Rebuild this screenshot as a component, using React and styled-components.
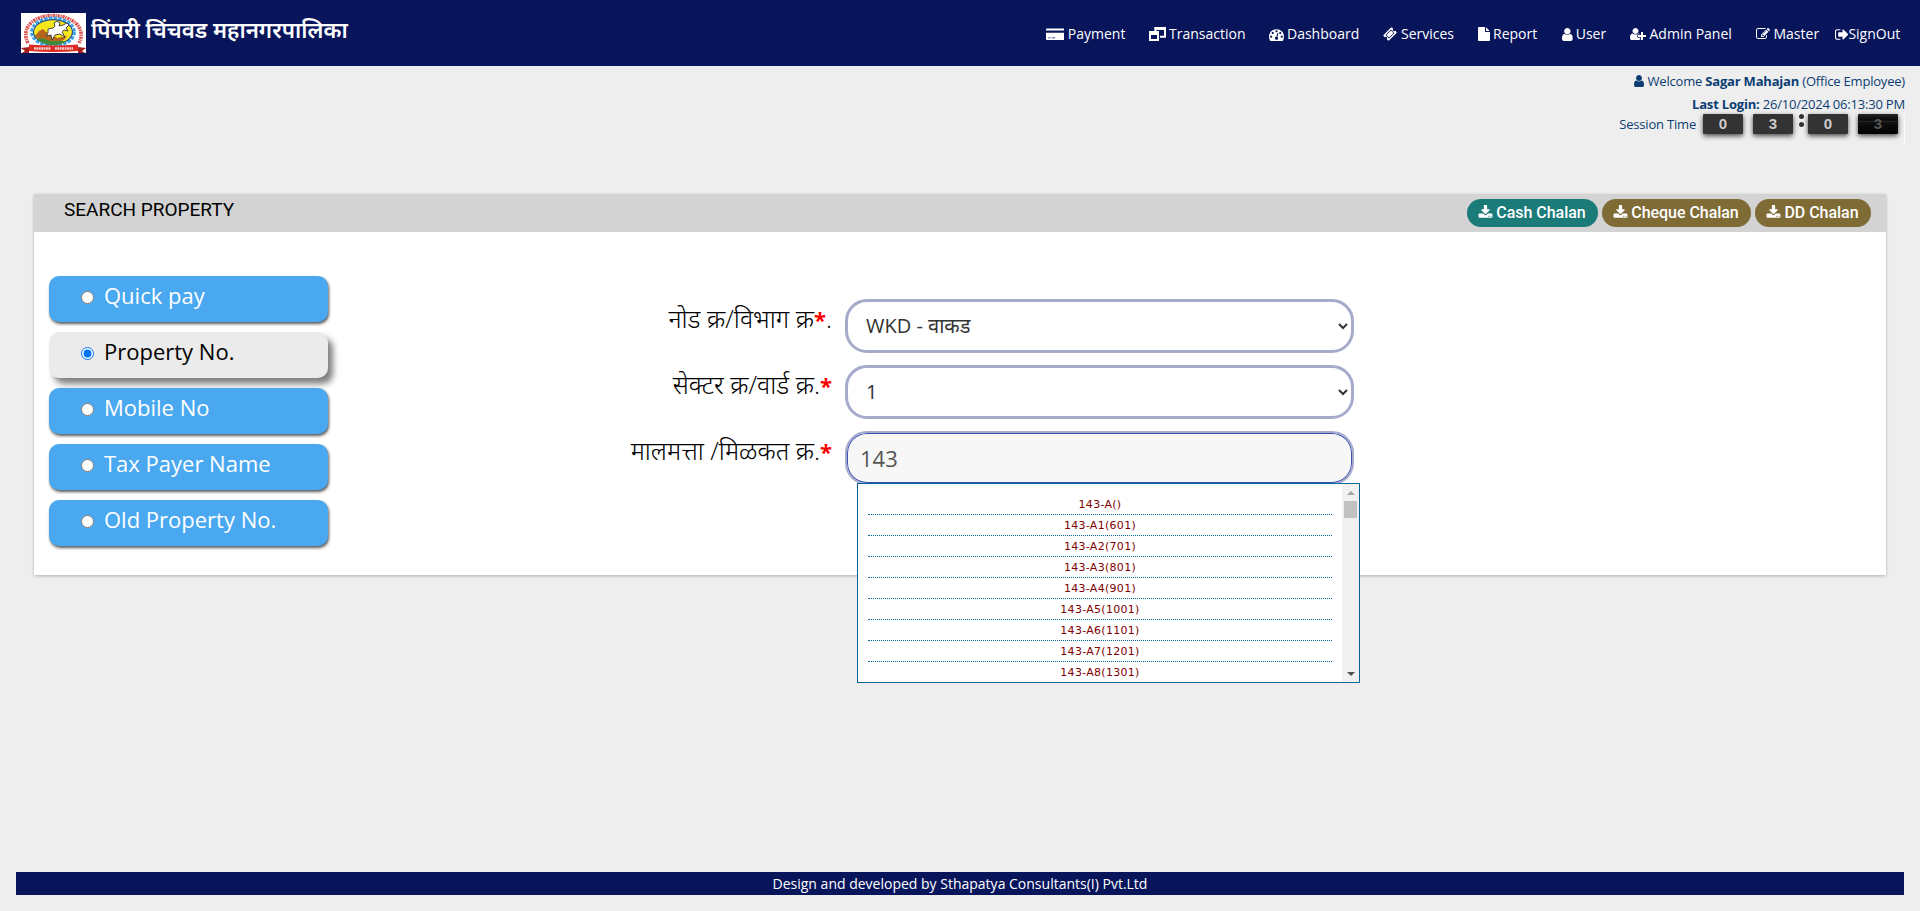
import React from 'react';
import styled, { createGlobalStyle } from 'styled-components';

const Global = createGlobalStyle`
  *, *::before, *::after { box-sizing: border-box; }
  body { margin: 0; background: #eee; font-family: "Open Sans", "Noto Sans", sans-serif; }
`;

const Page = styled.div`
  height: 911px;
  display: flex;
  flex-direction: column;
  overflow: hidden;
`;

const Header = styled.header`
  height: 66px;
  flex: none;
  display: flex;
  align-items: flex-start;
  justify-content: space-between;
  background: #08155b;
  padding: 13px 20px 0 21px;
`;

const Brand = styled.div`
  display: flex;
  gap: 5px;
`;

const BrandName = styled.h1`
  margin: 0;
  color: #fff;
  font-size: 22.3px;
  line-height: 33px;
  font-weight: 600;
  white-space: nowrap;
`;

const Logo = styled.svg`
  width: 65px;
  height: 40px;
  display: block;
`;

const Nav = styled.nav`
  display: flex;
  padding-top: 11px;
`;

const NavItem = styled.a`
  display: flex;
  align-items: center;
  gap: ${(p) => p.$gap ?? 3}px;
  width: ${(p) => p.$width}px;
  color: #fff;
  font-size: 14px;
  line-height: 20px;
  white-space: nowrap;
`;

const Glyph = styled.svg`
  display: block;
  flex: none;
  fill: currentColor;
`;

const Account = styled.section`
  height: 128px;
  flex: none;
  display: flex;
  flex-direction: column;
  align-items: flex-end;
  padding: 3px 15px 0 0;
  color: #0b3d73;
  font-size: 13px;
  letter-spacing: -0.2px;
`;

const AccountLine = styled.div`
  display: flex;
  align-items: center;
  gap: 4px;
  height: 23px;
  line-height: 20px;
  white-space: nowrap;
`;

const Session = styled.div`
  display: flex;
  align-items: flex-start;
  height: 32px;
  margin-top: -2px;
  padding-right: 1px;
  border-right: 1px solid #fafafa;
  line-height: 23px;
`;

const Clock = styled.div`
  display: flex;
  margin: 1px 5px 0 7px;
`;

const Digit = styled.span`
  position: relative;
  width: 40px;
  height: 20px;
  margin-right: ${(p) => p.$after ?? 0}px;
  border-radius: 1px;
  background: ${(p) => (p.$turning ? 'linear-gradient(#252525 0, #080808 30%, #000 31%, #333 36%, #111 40%, #000 100%)' : '#333')};
  box-shadow: 0 2px 5px rgba(0, 0, 0, .7);
  color: ${(p) => (p.$turning ? '#555' : '#ccc')};
  font: bold 15px/20px "Liberation Sans", Arial, sans-serif;
  letter-spacing: 0;
  text-align: center;
`;

const Colon = styled.span`
  width: 15px;
  display: flex;
  flex-direction: column;
  align-items: center;
  gap: 3px;
  padding-left: 2px;
  &::before, &::after {
    content: "";
    width: 5px;
    height: 5px;
    border-radius: 50%;
    background: #333;
  }
`;

const Card = styled.main`
  height: 381px;
  flex: none;
  margin: 0 34px;
  background: #fff;
  box-shadow: 0 1px 3px rgba(0, 0, 0, .25);
`;

const CardHeader = styled.div`
  height: 38px;
  display: flex;
  align-items: flex-start;
  justify-content: space-between;
  padding: 5px 15px 0 30px;
  background: #d3d3d3;
  font-family: Roboto, sans-serif;
`;

const CardTitle = styled.h2`
  margin: 0;
  color: #000;
  font-size: 19px;
  line-height: 21px;
  font-weight: 400;
`;

const Chalans = styled.div`
  display: flex;
  gap: 4px;
`;

const ChalanButton = styled.button`
  width: ${(p) => p.$width}px;
  height: 28px;
  display: flex;
  align-items: center;
  justify-content: center;
  gap: 3px;
  padding: 0 1px 1px 0;
  border: 0;
  border-radius: 14px;
  background: ${(p) => p.$color};
  color: #fff;
  font: 500 16px/24px Roboto, sans-serif;
  letter-spacing: -0.04px;
  white-space: nowrap;
`;

const CardBody = styled.div`
  display: flex;
`;

const Options = styled.div`
  width: 294px;
  display: flex;
  flex-direction: column;
  gap: 10px;
  padding: 44px 0 0 15px;
`;

const Option = styled.label`
  width: 279px;
  height: 46px;
  display: flex;
  align-items: flex-start;
  padding-left: 32px;
  border-radius: 10px;
  background: ${(p) => (p.$active ? '#ebebeb' : '#49a8f0')};
  box-shadow: ${(p) => (p.$active ? '5px 6px 6px rgba(0, 0, 0, .5)' : '1px 2px 3px rgba(0, 0, 0, .65)')};
  color: ${(p) => (p.$active ? '#000' : '#fff')};
  font-size: 22px;
  line-height: 38px;
  white-space: nowrap;
  input { margin: 15px 10px 0 0; width: 13px; height: 13px; }
`;

const Fields = styled.form`
  width: 1030px;
  display: flex;
  flex-direction: column;
  gap: 12px;
  padding-top: 67px;
`;

const Field = styled.div`
  height: 54px;
  display: flex;
  position: relative;
`;

const FieldLabel = styled.label`
  width: 504px;
  margin-right: 13px;
  color: #000;
  font-size: 25.1px;
  line-height: 39px;
  font-weight: 300;
  text-align: right;
  white-space: nowrap;
`;

const Required = styled.span`
  color: red;
  font-size: 22px;
  font-weight: 700;
`;

const boxStyle = `
  width: 509px;
  height: 54px;
  margin: 0;
  border: 3px solid #a7abcb;
  border-radius: 22px;
  font: 400 20px/28px "Open Sans", "Noto Sans", sans-serif;
  outline: 0;
`;

const Select = styled.select`
  ${boxStyle}
  padding: 0 0 2px 14px;
  background: #fff;
  color: #333;
`;

const Input = styled.input`
  ${boxStyle}
  padding: 0 12px 0 13px;
  border-width: 2px;
  background: #f7f7f8;
  box-shadow: inset 0 0 0 1px #3c4fb0;
  color: #555;
  font-size: 22px;
`;

const Suggestions = styled.div`
  position: absolute;
  z-index: 2;
  top: 52px;
  left: 529px;
  width: 503px;
  height: 200px;
  display: flex;
  border: 1px solid #006699;
  background: #fff;
`;

const SuggestionList = styled.ul`
  flex: 1;
  margin: 0;
  padding: 10px;
  overflow: hidden;
  list-style: none;
`;

const Suggestion = styled.li`
  height: 21px;
  border-bottom: 1px dotted #006699;
  color: #800000;
  font: 11px/22px "DejaVu Sans", sans-serif;
  letter-spacing: 0.3px;
  text-align: center;
`;

const ScrollTrack = styled.div`
  width: 17px;
  display: flex;
  flex-direction: column;
  align-items: center;
  background: #f1f1f1;
`;

const ScrollArrow = styled.i`
  width: 17px;
  height: 17px;
  display: flex;
  align-items: center;
  justify-content: center;
  color: ${(p) => p.$color};
`;

const ScrollThumb = styled.i`
  width: 13px;
  height: 17px;
  margin-bottom: auto;
  background: #c1c1c1;
`;

const Footer = styled.footer`
  height: 23px;
  margin: auto 16px 16px;
  background: #08155b;
  color: #fff;
  font-size: 14px;
  line-height: 23px;
  text-align: center;
`;

const paths = {
  card: [2048, 'M0 384q0-96 96-96h1856q96 0 96 96v120H0zM0 760h2048v700q0 96-96 96H96q-96 0-96-96zM256 1280v100h256v-100zM640 1280v100h384v-100z'],
  windows: [2176, 'M680 0h1496v1370h-768v-256h512V384H936v128H680zM0 512h1280v1280H0zM256 1024v512h768v-512z'],
  dashboard: [1792, 'M384 1152q0-53-37.5-90.5t-90.5-37.5-90.5 37.5-37.5 90.5 37.5 90.5 90.5 37.5 90.5-37.5 37.5-90.5zm192-448q0-53-37.5-90.5t-90.5-37.5-90.5 37.5-37.5 90.5 37.5 90.5 90.5 37.5 90.5-37.5 37.5-90.5zm428 481l101-382q6-26-7.5-48.5t-38.5-29.5-48 6.5-30 39.5l-101 382q-60 5-107 43.5t-63 98.5q-20 77 20 146t117 89 146-20 89-117q16-60-6-117t-72-91zm660-33q0-53-37.5-90.5t-90.5-37.5-90.5 37.5-37.5 90.5 37.5 90.5 90.5 37.5 90.5-37.5 37.5-90.5zm-640-640q0-53-37.5-90.5t-90.5-37.5-90.5 37.5-37.5 90.5 37.5 90.5 90.5 37.5 90.5-37.5 37.5-90.5zm448 192q0-53-37.5-90.5t-90.5-37.5-90.5 37.5-37.5 90.5 37.5 90.5 90.5 37.5 90.5-37.5 37.5-90.5zm320 448q0 261-141 483-19 29-54 29h-1402q-35 0-54-29-141-221-141-483 0-182 71-348t191-286 286-191 348-71 348 71 286 191 191 286 71 348z'],
  ticket: [1792, 'M1024 452l316 316-572 572-316-316zm-211 979l618-618q19-19 19-45t-19-45l-362-362q-18-18-45-18t-45 18l-618 618q-19 19-19 45t19 45l362 362q18 18 45 18t45-18zm889-637l-907 908q-37 37-90.5 37t-90.5-37l-126-126q56-56 56-136t-56-136-136-56-136 56l-125-126q-37-37-37-90.5t37-90.5l907-906q37-37 90.5-37t90.5 37l125 125q-56 56-56 136t56 136 136 56 136-56l126 125q37 37 37 90.5t-37 90.5z'],
  file: [1536, 'M1024 512V40q22 14 36 28l408 408q14 14 28 36zm-128 32q0 40 28 68t68 28h544v1056q0 40-28 68t-68 28H96q-40 0-68-28t-28-68V96q0-40 28-68t68-28h800z'],
  user: [1280, 'M1280 1399q0 109-62.5 187t-150.5 78H213q-88 0-150.5-78T0 1399q0-85 8.5-160.5t31.5-152 58.5-131 94-89 134.5-34.5q131 128 313 128t313-128q76 0 134.5 34.5t94 89 58.5 131 31.5 152 8.5 160.5zm-256-887q0 159-112.5 271.5t-271.5 112.5-271.5-112.5-112.5-271.5 112.5-271.5 271.5-112.5 271.5 112.5 112.5 271.5z'],
  userPlus: [2048, 'M704 896q-159 0-271.5-112.5t-112.5-271.5 112.5-271.5 271.5-112.5 271.5 112.5 112.5 271.5-112.5 271.5-271.5 112.5zm960 128h352q13 0 22.5 9.5t9.5 22.5v192q0 13-9.5 22.5t-22.5 9.5h-352v352q0 13-9.5 22.5t-22.5 9.5h-192q-13 0-22.5-9.5t-9.5-22.5v-352h-352q-13 0-22.5-9.5t-9.5-22.5v-192q0-13 9.5-22.5t22.5-9.5h352v-352q0-13 9.5-22.5t22.5-9.5h192q13 0 22.5 9.5t9.5 22.5v352zm-736 224q0 52 38 90t90 38h256v238q-68 50-171 50h-874q-121 0-194-69t-73-190q0-53 3.5-103.5t14-109 26.5-108.5 43-97.5 62-81 85.5-53.5 111.5-20q19 0 39 17 79 61 154.5 91.5t164.5 30.5 164.5-30.5 154.5-91.5q20-17 39-17 132 0 217 96h-223q-52 0-90 38t-38 90v192z'],
  edit: [1792, 'M888 1184l116-116-152-152-116 116v56h96v96h56zm440-720q-16-16-33 1l-350 350q-17 17-1 33t33-1l350-350q17-17 1-33zm80 594v190q0 119-84.5 203.5t-203.5 84.5h-832q-119 0-203.5-84.5t-84.5-203.5v-832q0-119 84.5-203.5t203.5-84.5h832q63 0 117 25 15 7 18 23 3 17-9 29l-49 49q-14 14-32 8-23-6-45-6h-832q-66 0-113 47t-47 113v832q0 66 47 113t113 47h832q66 0 113-47t47-113v-126q0-13 9-22l64-64q15-15 35-7t20 29zm-96-738l288 288-672 672h-288v-288zm444 132l-92 92-288-288 92-92q28-28 68-28t68 28l152 152q28 28 28 68t-28 68z'],
  signOut: [1600, 'M640 1440q0 4 1 20t.5 26.5-3 23.5-10 19.5-20.5 6.5h-320q-119 0-203.5-84.5t-84.5-203.5v-704q0-119 84.5-203.5t203.5-84.5h320q13 0 22.5 9.5t9.5 22.5q0 4 1 20t.5 26.5-3 23.5-10 19.5-20.5 6.5h-320q-66 0-113 47t-47 113v704q0 66 47 113t113 47h312l11.5 1 11.5 3 8 5.5 7 9 2 13.5zm928-544q0 26-19 45l-544 544q-19 19-45 19t-45-19-19-45v-288h-448q-26 0-45-19t-19-45v-384q0-26 19-45t45-19h448v-288q0-26 19-45t45-19 45 19l544 544q19 19 19 45z'],
  download: [1792, 'M1344 1344q0-26-19-45t-45-19-45 19-19 45 19 45 45 19 45-19 19-45zm256 0q0-26-19-45t-45-19-45 19-19 45 19 45 45 19 45-19 19-45zm128-224v320q0 40-28 68t-68 28h-1472q-40 0-68-28t-28-68v-320q0-40 28-68t68-28h465l135 136q58 56 136 56t136-56l136-136h464q40 0 68 28t28 68zm-325-569q17 41-14 70l-448 448q-18 19-45 19t-45-19l-448-448q-31-29-14-70 17-39 59-39h256v-448q0-26 19-45t45-19h256q26 0 45 19t19 45v448h256q42 0 59 39z'],
};

function Icon({ name, size = 14 }) {
  const [w, d] = paths[name];
  return (
    <Glyph width={(size * w) / 1792} height={size} viewBox={`0 0 ${w} 1792`}>
      <path fillRule="evenodd" d={d} />
    </Glyph>
  );
}

function Emblem() {
  return (
    <Logo viewBox="0 0 65 40">
      <rect width="65" height="40" fill="#fff" />
      <path d="M7 30C-1 14 14 2.500 32 2.500S66 14 58 30" fill="none" stroke="#dc4f4b" strokeWidth="3.600" strokeDasharray="2.200 .8 1.200 .8" />
      <ellipse cx="32" cy="19" rx="21.500" ry="14" fill="#fff" stroke="#3aa4e8" strokeWidth="2.800" strokeDasharray="3.500 1.200" />
      <ellipse cx="32" cy="19" rx="19.500" ry="12.300" fill="#f6e71c" stroke="#25528f" strokeWidth="1.200" />
      <path d="M14 23l4-5 4-2 3 3 6 3 5 3 10-2-3 4-9 3H22z" fill="#b5651d" />
      <path d="M16 26q7-2 12 2h18q-6 4-14 4-10 0-16-6z" fill="#3f8b35" />
      <path d="M27 16l5-1 2-2-1-3 3-2 3 2-1 3 4-1 4-2 2 2-3 3 2 3-4-1-2 2 3 5-5-3-5 1-3 5-1-5-5 1 2-3z" fill="#fff" stroke="#333" strokeWidth=".9" />
      <path d="M0 35l8-1v6H1l3-2zM65 35l-8-1v6h7l-3-2z" fill="#a91e1e" />
      <path d="M8 31.500q24 2 49 0V38q-24 2-49 0z" fill="#e02b24" />
      <path d="M13 35.500h17m4 0h18" stroke="#fff" strokeWidth="2.400" strokeDasharray="1.800 .6" opacity=".8" />
    </Logo>
  );
}

const nav = [
  ['card', 'Payment', 103, 3.5, 16],
  ['windows', 'Transaction', 120, 3, 14],
  ['dashboard', 'Dashboard', 114, 3, 15],
  ['ticket', 'Services', 95, 4, 14],
  ['file', 'Report', 84, 3, 14],
  ['user', 'User', 68, 3, 15],
  ['userPlus', 'Admin Panel', 126, 3.5, 14],
  ['edit', 'Master', 79, 3.5, 14],
  ['signOut', 'SignOut', 65, 0, 15],
];

const options = ['Quick pay', 'Property No.', 'Mobile No', 'Tax Payer Name', 'Old Property No.'];

const suggestions = [
  '143-A()', '143-A1(601)', '143-A2(701)', '143-A3(801)', '143-A4(901)',
  '143-A5(1001)', '143-A6(1101)', '143-A7(1201)', '143-A8(1301)',
];

export default function App() {
  return (
    <Page>
      <Global />
      <Header>
        <Brand>
          <Emblem />
          <BrandName>पिंपरी चिंचवड महानगरपालिका</BrandName>
        </Brand>
        <Nav>
          {nav.map(([icon, label, width, gap, size]) => (
            <NavItem key={label} $width={width} $gap={gap}>
              <Icon name={icon} size={size} />
              {label}
            </NavItem>
          ))}
        </Nav>
      </Header>
      <Account>
        <AccountLine>
          <Icon name="user" size={14} />
          <span>Welcome <b>Sagar Mahajan</b> (Office Employee)</span>
        </AccountLine>
        <AccountLine>
          <span><b>Last Login:</b> 26/10/2024 06:13:30 PM</span>
        </AccountLine>
        <Session>
          Session Time
          <Clock>
            <Digit $after={10}>0</Digit>
            <Digit>3</Digit>
            <Colon />
            <Digit $after={10}>0</Digit>
            <Digit $turning>3</Digit>
          </Clock>
        </Session>
      </Account>
      <Card>
        <CardHeader>
          <CardTitle>SEARCH PROPERTY</CardTitle>
          <Chalans>
            <ChalanButton $width={131} $color="#1b7b79"><Icon name="download" size={15} />Cash Chalan</ChalanButton>
            <ChalanButton $width={149} $color="#7e6b35"><Icon name="download" size={15} />Cheque Chalan</ChalanButton>
            <ChalanButton $width={116} $color="#7e6b35"><Icon name="download" size={15} />DD Chalan</ChalanButton>
          </Chalans>
        </CardHeader>
        <CardBody>
          <Options>
            {options.map((label) => (
              <Option key={label} $active={label === 'Property No.'}>
                <input type="radio" name="search" defaultChecked={label === 'Property No.'} />
                {label}
              </Option>
            ))}
          </Options>
          <Fields>
            <Field>
              <FieldLabel>नोड क्र/विभाग क्र<Required>*</Required>.</FieldLabel>
              <Select><option>WKD - वाकड</option></Select>
            </Field>
            <Field>
              <FieldLabel>सेक्टर क्र/वार्ड क्र.<Required>*</Required></FieldLabel>
              <Select><option>1</option></Select>
            </Field>
            <Field>
              <FieldLabel>मालमत्ता /मिळकत क्र.<Required>*</Required></FieldLabel>
              <Input defaultValue="143" />
              <Suggestions>
                <SuggestionList>
                  {suggestions.map((s) => <Suggestion key={s}>{s}</Suggestion>)}
                </SuggestionList>
                <ScrollTrack>
                  <ScrollArrow $color="#a3a3a3"><Glyph width="8" height="4" viewBox="0 0 8 4"><path d="M0 4l4-4 4 4z" /></Glyph></ScrollArrow>
                  <ScrollThumb />
                  <ScrollArrow $color="#505050"><Glyph width="8" height="4" viewBox="0 0 8 4"><path d="M0 0l4 4 4-4z" /></Glyph></ScrollArrow>
                </ScrollTrack>
              </Suggestions>
            </Field>
          </Fields>
        </CardBody>
      </Card>
      <Footer>Design and developed by Sthapatya Consultants(I) Pvt.Ltd</Footer>
    </Page>
  );
}
